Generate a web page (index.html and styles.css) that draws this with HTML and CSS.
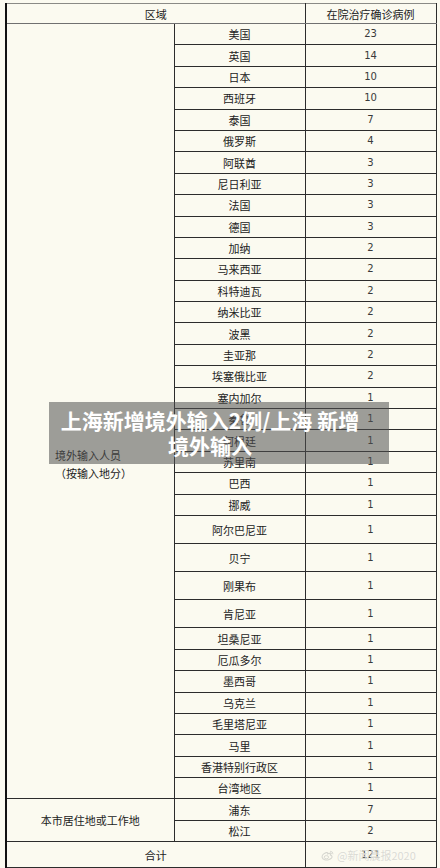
FILE: index.html
```html
<!DOCTYPE html>
<html lang="zh-CN">
<head>
<meta charset="utf-8">
<title>上海新增境外输入</title>
<link rel="stylesheet" href="styles.css">
</head>
<body>
<table class="grid">
  <colgroup><col class="c1"><col class="c2"><col class="c3"></colgroup>
  <tr class="hd"><th colspan="2">区域</th><th>在院治疗确诊病例</th></tr>
  <tr class="r"><td rowspan="35" class="group"><div>境外输入人员</div><div>（按输入地分）</div></td><td>美国</td><td class="n">23</td></tr>
  <tr class="r"><td>英国</td><td class="n">14</td></tr>
  <tr class="r"><td>日本</td><td class="n">10</td></tr>
  <tr class="r"><td>西班牙</td><td class="n">10</td></tr>
  <tr class="r"><td>泰国</td><td class="n">7</td></tr>
  <tr class="r"><td>俄罗斯</td><td class="n">4</td></tr>
  <tr class="r"><td>阿联酋</td><td class="n">3</td></tr>
  <tr class="r"><td>尼日利亚</td><td class="n">3</td></tr>
  <tr class="r"><td>法国</td><td class="n">3</td></tr>
  <tr class="r"><td>德国</td><td class="n">3</td></tr>
  <tr class="r"><td>加纳</td><td class="n">2</td></tr>
  <tr class="r"><td>马来西亚</td><td class="n">2</td></tr>
  <tr class="r"><td>科特迪瓦</td><td class="n">2</td></tr>
  <tr class="r"><td>纳米比亚</td><td class="n">2</td></tr>
  <tr class="r"><td>波黑</td><td class="n">2</td></tr>
  <tr class="r"><td>圭亚那</td><td class="n">2</td></tr>
  <tr class="r"><td>埃塞俄比亚</td><td class="n">2</td></tr>
  <tr class="r"><td>塞内加尔</td><td class="n">1</td></tr>
  <tr class="r"><td>秦鲁</td><td class="n">1</td></tr>
  <tr class="r"><td>阿根廷</td><td class="n">1</td></tr>
  <tr class="r"><td>苏里南</td><td class="n">1</td></tr>
  <tr class="r"><td>巴西</td><td class="n">1</td></tr>
  <tr class="r"><td>挪威</td><td class="n">1</td></tr>
  <tr class="t"><td>阿尔巴尼亚</td><td class="n">1</td></tr>
  <tr class="t"><td>贝宁</td><td class="n">1</td></tr>
  <tr class="t"><td>刚果布</td><td class="n">1</td></tr>
  <tr class="t"><td>肯尼亚</td><td class="n">1</td></tr>
  <tr class="r"><td>坦桑尼亚</td><td class="n">1</td></tr>
  <tr class="r"><td>厄瓜多尔</td><td class="n">1</td></tr>
  <tr class="r"><td>墨西哥</td><td class="n">1</td></tr>
  <tr class="r"><td>乌克兰</td><td class="n">1</td></tr>
  <tr class="r"><td>毛里塔尼亚</td><td class="n">1</td></tr>
  <tr class="r"><td>马里</td><td class="n">1</td></tr>
  <tr class="r"><td>香港特别行政区</td><td class="n">1</td></tr>
  <tr class="r"><td>台湾地区</td><td class="n">1</td></tr>
  <tr class="r gtop"><td rowspan="2" class="local">本市居住地或工作地</td><td>浦东</td><td class="n">7</td></tr>
  <tr class="r"><td>松江</td><td class="n">2</td></tr>
  <tr class="tot"><td colspan="2">合计</td><td class="n">121</td></tr>
</table>

<div class="banner">上海新增境外输入2例/上海 新增<br>境外输入</div>

<div class="mark">
  <svg class="weibo" width="13" height="11" viewBox="0 0 13 11">
    <path d="M5.2 2.6C2.6 3.4 0.6 5.6 1.2 7.6c0.6 2 3.8 2.9 6.4 2.2 2.6-0.7 3.9-2.3 3.3-3.6-0.4-0.8-1.4-0.9-1.6-1.2 0.4-0.9 0.2-1.6-1-1.6-0.8 0-1.6 0.4-1.6 0.4 0.3-0.9-0.2-1.5-1.5-1.2z" fill="none" stroke="#d6d6cf" stroke-width="1.1"/>
    <ellipse cx="5.4" cy="7.2" rx="2.2" ry="1.6" fill="none" stroke="#d6d6cf" stroke-width="0.9"/>
    <path d="M9 1.2a3 3 0 0 1 3 3M9 2.7a1.5 1.5 0 0 1 1.5 1.5" fill="none" stroke="#d6d6cf" stroke-width="0.9"/>
  </svg>
  <span>@新闻晨报2020</span>
</div>
</body>
</html>
```

FILE: styles.css
```css
html, body {
  margin: 0;
  padding: 0;
}

body {
  width: 440px;
  height: 868px;
  overflow: hidden;
  position: relative;
  background: #fbfaf0;
}

.grid {
  margin: 3px 0 0 5px;
  width: 431px;
  border-collapse: collapse;
  table-layout: fixed;
  font-family: "Noto Sans CJK SC", "Noto Sans", sans-serif;
  font-size: 11px;
  color: #222;
  border-left: 2px solid #111;
  border-right: 1px solid #8a8a86;
  border-bottom: 1px solid #8a8a86;
}

.c1 { width: 168px; }
.c2 { width: 131px; }
.c3 { width: 131px; }

.grid th,
.grid td {
  border: 1px solid #2c2c2c;
  padding: 0;
  text-align: center;
  vertical-align: middle;
  line-height: 14px;
  font-weight: 400;
}

.hd { height: 20px; }
.hd th {
  border-top-color: #8a8a86;
  border-bottom-color: #707070;
}

.r { height: 21.4px; }
.t { height: 28.1px; }
.tot { height: 25.7px; }

.grid td.n {
  font-family: "DejaVu Sans", sans-serif;
  font-size: 10px;
  color: #3a3a3a;
}

.grid td.group {
  vertical-align: top;
  text-align: left;
  padding: 422px 0 0 48px;
  line-height: 18px;
}

.grid td.local {
  border-top-color: #777;
}

.banner {
  position: absolute;
  left: 49px;
  top: 402px;
  width: 340px;
  box-sizing: border-box;
  padding: 6px 29px 6px 11px;
  background: rgba(80, 80, 80, 0.55);
  color: #fff;
  font-family: "Noto Sans CJK SC", "Noto Sans", sans-serif;
  font-weight: 700;
  font-size: 21px;
  line-height: 25px;
  text-align: center;
  white-space: nowrap;
}

.mark {
  position: absolute;
  left: 321px;
  top: 849px;
  display: flex;
  align-items: center;
  gap: 3px;
  font-family: "Noto Sans CJK SC", "Noto Sans", sans-serif;
  font-size: 11px;
  line-height: 13px;
  color: rgba(214, 214, 207, 0.9);
  text-shadow: 0 0 1px rgba(255, 255, 255, 0.8);
}
```
